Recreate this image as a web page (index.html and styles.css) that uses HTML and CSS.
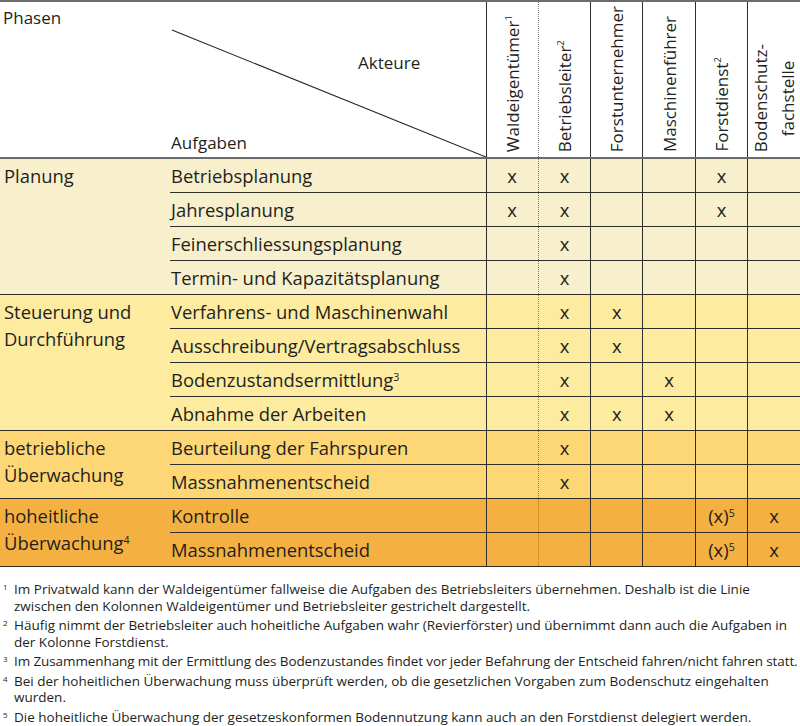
FILE: index.html
```html
<!DOCTYPE html>
<html lang="de">
<head>
<meta charset="utf-8">
<title>Phasen und Akteure</title>
<link rel="stylesheet" href="styles.css">
</head>
<body>
<table class="matrix">
  <colgroup>
    <col class="c-phase">
    <col class="c-task">
    <col class="c-act"><col class="c-act"><col class="c-act"><col class="c-act"><col class="c-act"><col class="c-act">
  </colgroup>
  <thead>
    <tr>
      <th colspan="2" class="corner">
        <div class="corner-box">
          <svg class="diag" viewBox="0 0 486 155" preserveAspectRatio="none" aria-hidden="true"><line x1="172" y1="28" x2="486" y2="155" stroke="#222" stroke-width="1.1"/></svg>
          <span class="lbl-phasen">Phasen</span>
          <span class="lbl-akteure">Akteure</span>
          <span class="lbl-aufgaben">Aufgaben</span>
        </div>
      </th>
      <th class="actor"><div class="vbox"><span class="vtext">Waldeigentümer<sup>1</sup></span></div></th>
      <th class="actor dotted"><div class="vbox"><span class="vtext">Betriebsleiter<sup>2</sup></span></div></th>
      <th class="actor"><div class="vbox"><span class="vtext">Forstunternehmer</span></div></th>
      <th class="actor"><div class="vbox"><span class="vtext">Maschinenführer</span></div></th>
      <th class="actor"><div class="vbox"><span class="vtext">Forstdienst<sup>2</sup></span></div></th>
      <th class="actor"><div class="vbox"><span class="vtext">Bodenschutz-<br>fachstelle</span></div></th>
    </tr>
  </thead>
  <tbody class="ph-plan">
    <tr><td class="phase" rowspan="4">Planung</td><td class="task">Betriebsplanung</td><td class="m">x</td><td class="m dotted">x</td><td class="m"></td><td class="m"></td><td class="m">x</td><td class="m"></td></tr>
    <tr><td class="task">Jahresplanung</td><td class="m">x</td><td class="m dotted">x</td><td class="m"></td><td class="m"></td><td class="m">x</td><td class="m"></td></tr>
    <tr><td class="task">Feinerschliessungsplanung</td><td class="m"></td><td class="m dotted">x</td><td class="m"></td><td class="m"></td><td class="m"></td><td class="m"></td></tr>
    <tr><td class="task">Termin- und Kapazitätsplanung</td><td class="m"></td><td class="m dotted">x</td><td class="m"></td><td class="m"></td><td class="m"></td><td class="m"></td></tr>
  </tbody>
  <tbody class="ph-steu">
    <tr><td class="phase" rowspan="4">Steuerung und<br>Durchführung</td><td class="task">Verfahrens- und Maschinenwahl</td><td class="m"></td><td class="m dotted">x</td><td class="m">x</td><td class="m"></td><td class="m"></td><td class="m"></td></tr>
    <tr><td class="task">Ausschreibung/Vertragsabschluss</td><td class="m"></td><td class="m dotted">x</td><td class="m">x</td><td class="m"></td><td class="m"></td><td class="m"></td></tr>
    <tr><td class="task">Bodenzustandsermittlung<sup>3</sup></td><td class="m"></td><td class="m dotted">x</td><td class="m"></td><td class="m">x</td><td class="m"></td><td class="m"></td></tr>
    <tr><td class="task">Abnahme der Arbeiten</td><td class="m"></td><td class="m dotted">x</td><td class="m">x</td><td class="m">x</td><td class="m"></td><td class="m"></td></tr>
  </tbody>
  <tbody class="ph-betr">
    <tr><td class="phase" rowspan="2">betriebliche<br>Überwachung</td><td class="task">Beurteilung der Fahrspuren</td><td class="m"></td><td class="m dotted">x</td><td class="m"></td><td class="m"></td><td class="m"></td><td class="m"></td></tr>
    <tr><td class="task">Massnahmenentscheid</td><td class="m"></td><td class="m dotted">x</td><td class="m"></td><td class="m"></td><td class="m"></td><td class="m"></td></tr>
  </tbody>
  <tbody class="ph-hoh">
    <tr><td class="phase" rowspan="2">hoheitliche<br>Überwachung<sup>4</sup></td><td class="task">Kontrolle</td><td class="m"></td><td class="m dotted"></td><td class="m"></td><td class="m"></td><td class="m">(x)<sup>5</sup></td><td class="m">x</td></tr>
    <tr><td class="task">Massnahmenentscheid</td><td class="m"></td><td class="m dotted"></td><td class="m"></td><td class="m"></td><td class="m">(x)<sup>5</sup></td><td class="m">x</td></tr>
  </tbody>
</table>

<div class="notes">
  <div class="note"><span class="num">1</span><span class="txt">Im Privatwald kann der Waldeigentümer fallweise die Aufgaben des Betriebsleiters übernehmen. Deshalb ist die Linie<br>zwischen den Kolonnen Waldeigentümer und Betriebsleiter gestrichelt dargestellt.</span></div>
  <div class="note"><span class="num">2</span><span class="txt">Häufig nimmt der Betriebsleiter auch hoheitliche Aufgaben wahr (Revierförster) und übernimmt dann auch die Aufgaben in<br>der Kolonne Forstdienst.</span></div>
  <div class="note"><span class="num">3</span><span class="txt tight">Im Zusammenhang mit der Ermittlung des Bodenzustandes findet vor jeder Befahrung der Entscheid fahren/nicht fahren statt.</span></div>
  <div class="note"><span class="num">4</span><span class="txt">Bei der hoheitlichen Überwachung muss überprüft werden, ob die gesetzlichen Vorgaben zum Bodenschutz eingehalten<br>wurden.</span></div>
  <div class="note"><span class="num">5</span><span class="txt">Die hoheitliche Überwachung der gesetzeskonformen Bodennutzung kann auch an den Forstdienst delegiert werden.</span></div>
</div>
</body>
</html>
```

FILE: styles.css
```css
html, body {
  margin: 0;
  padding: 0;
  background: #ffffff;
}

body {
  font-family: "Open Sans", "Noto Sans", "Liberation Sans", sans-serif;
  color: #231f20;
  width: 800px;
}

.matrix {
  width: 800px;
  border-collapse: collapse;
  table-layout: fixed;
  border-top: 2px solid #6b6b6b;
  border-bottom: 1px solid #2e2e2a;
  font-size: 18.4px;
}

.c-phase { width: 170px; }
.c-task { width: 316px; }
.c-act { width: 52.33px; }

.matrix th {
  padding: 0;
  font-weight: normal;
  font-size: 17px;
  border-bottom: 2px solid #6b6b6b;
  vertical-align: bottom;
}

.corner { text-align: left; }

.corner-box {
  position: relative;
  height: 155px;
  display: flex;
  flex-direction: column;
  align-items: flex-start;
}

.diag {
  position: absolute;
  left: 0;
  top: 0;
  width: 486px;
  height: 155px;
}

.lbl-phasen {
  line-height: 24px;
  margin: 4px 0 0 3px;
}

.lbl-akteure {
  line-height: 24px;
  margin: 21px 0 0 358px;
}

.lbl-aufgaben {
  line-height: 24px;
  margin: auto 0 2px 171px;
}

.actor { border-left: 1px solid #2e2e2a; }

.vbox {
  height: 155px;
  display: flex;
  justify-content: center;
  align-items: flex-end;
}

.vtext {
  writing-mode: vertical-rl;
  transform: rotate(180deg);
  line-height: 27px;
  padding-top: 5px;
  white-space: nowrap;
}

sup {
  font-size: 0.58em;
  line-height: 0;
  vertical-align: 0.55em;
}

.matrix td {
  padding: 0;
  height: 33px;
  line-height: 33px;
  border-top: 1px solid #2e2e2a;
  white-space: nowrap;
  vertical-align: top;
}

.matrix td.phase {
  vertical-align: top;
  line-height: 27px;
  padding: 3px 0 0 4px;
}

.matrix td.task { padding-left: 1px; }

.matrix td.m {
  text-align: center;
  border-left: 1px solid #2e2e2a;
}

.matrix .dotted { border-left: 1px dotted #7f7f7f; }
.matrix td.m.dotted { border-left: 1px dotted #7f7f7f; }

.ph-plan td { background: #f8f0cd; }
.ph-steu td { background: #fdeb9f; }
.ph-betr td { background: #fdd775; }
.ph-hoh td { background: #f4b141; }

.notes {
  padding-top: 14px;
  font-size: 13.5px;
  line-height: 16.5px;
}

.note {
  display: flex;
  margin-bottom: 3px;
  white-space: nowrap;
}

.num {
  width: 14px;
  flex: none;
  padding-left: 3px;
  box-sizing: border-box;
  font-size: 8px;
  line-height: 12px;
}

.txt.tight { letter-spacing: -0.1px; }
```
